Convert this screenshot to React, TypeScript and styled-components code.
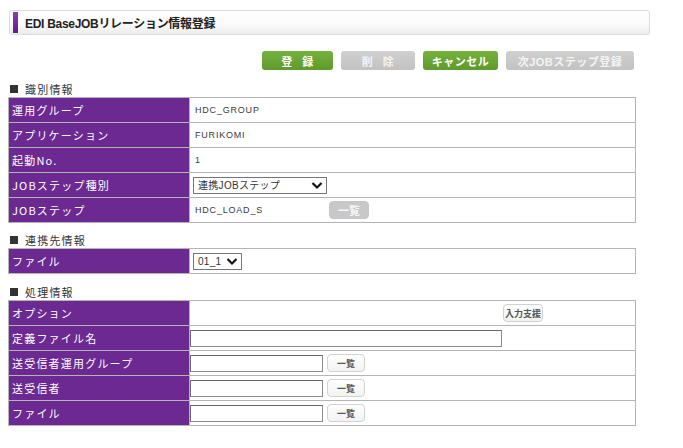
import React from "react";
import styled, { createGlobalStyle } from "styled-components";

const GlobalStyle = createGlobalStyle`
  html, body {
    margin: 0;
    padding: 0;
    background: #ffffff;
  }
  body {
    font-family: "Liberation Sans", "Noto Sans CJK JP", sans-serif;
    color: #333;
  }
`;

const purple = "#6b2991";
const lineGray = "#b4b4b4";

const Page = styled.div`
  width: 683px;
  padding: 10px 0 0 8px;
  box-sizing: border-box;
`;

const TitleBar = styled.div`
  width: 641px;
  height: 25px;
  margin-left: 1px;
  box-sizing: border-box;
  border: 1px solid #dcdcdc;
  border-radius: 3px;
  background: linear-gradient(#ffffff 0%, #fbfbfb 55%, #ececec 100%);
  display: flex;
  align-items: center;
  position: relative;
  padding-left: 15px;
  &::before {
    content: "";
    position: absolute;
    left: 3px;
    top: 1px;
    bottom: 1px;
    width: 5px;
    background: linear-gradient(#8a3db3, #5e1f82);
  }
`;

const TitleText = styled.h1`
  margin: 0;
  font-size: 12px;
  font-weight: bold;
  color: #222;
  letter-spacing: -0.3px;
`;

const ButtonBar = styled.div`
  width: 626px;
  display: flex;
  justify-content: flex-end;
  gap: 8px;
  margin-top: 16px;
`;

const ActionButton = styled.button<{ $tone: "green" | "gray"; $w: number }>`
  width: ${(p) => p.$w}px;
  height: 19px;
  padding: 0;
  border: none;
  border-radius: 3px;
  font-family: "Liberation Sans", "Noto Sans CJK JP", sans-serif;
  font-size: 11px;
  font-weight: bold;
  letter-spacing: 0.5px;
  color: ${(p) => (p.$tone === "green" ? "#ffffff" : "#f4f4f4")};
  background: ${(p) =>
    p.$tone === "green"
      ? "linear-gradient(#74b23c, #5f9a2c)"
      : "linear-gradient(#d0d0d0, #c2c2c2)"};
  word-spacing: 6px;
`;

const SectionTitle = styled.div<{ $gap: number }>`
  margin-top: ${(p) => p.$gap}px;
  height: 16px;
  display: flex;
  align-items: center;
  gap: 7px;
  padding-left: 2px;
  font-family: "Noto Sans CJK JP", sans-serif;
  font-size: 11px;
  color: #333;
  letter-spacing: 1.2px;
  &::before {
    content: "";
    width: 8px;
    height: 8px;
    background: #333;
  }
`;

const FormTable = styled.table`
  width: 628px;
  border-collapse: collapse;
  table-layout: fixed;
`;

const LabelCell = styled.th`
  width: 181px;
  height: 24px;
  padding: 0 0 0 3px;
  box-sizing: border-box;
  background: ${purple};
  border: 1px solid ${lineGray};
  color: #ffffff;
  text-align: left;
  font-family: "Noto Sans CJK JP", sans-serif;
  font-size: 11px;
  font-weight: normal;
  letter-spacing: 1.2px;
`;

const ValueCell = styled.td<{ $pad?: number }>`
  height: 24px;
  padding: 0 0 0 ${(p) => p.$pad ?? 5}px;
  border: 1px solid ${lineGray};
  font-size: 9px;
  color: #3a3a3a;
  letter-spacing: 0.8px;
  vertical-align: middle;
`;

const CellRow = styled.div`
  display: flex;
  align-items: center;
  gap: 4px;
`;

const ValueText = styled.span`
  width: 130px;
`;

const SelectWrap = styled.span<{ $w: number }>`
  position: relative;
  display: inline-block;
  width: ${(p) => p.$w}px;
  height: 17px;
  vertical-align: middle;
`;

const Select = styled.select`
  appearance: none;
  width: 100%;
  height: 100%;
  box-sizing: border-box;
  border: 1px solid #767676;
  border-radius: 0;
  background: #fff;
  padding: 0 0 0 4px;
  font-family: "Liberation Sans", "Noto Sans CJK JP", sans-serif;
  font-size: 10px;
  color: #333;
  letter-spacing: 0.3px;
`;

const Chevron = styled.svg`
  position: absolute;
  right: 4px;
  top: 4px;
  pointer-events: none;
`;

const TextInput = styled.input<{ $w: number }>`
  width: ${(p) => p.$w}px;
  height: 17px;
  margin: 0;
  box-sizing: border-box;
  border: 1px solid #8a8a8a;
  border-top-color: #6a6a6a;
  border-left-color: #6a6a6a;
  padding: 0 3px;
  font-size: 10px;
  vertical-align: middle;
`;

const SmallButton = styled.button<{ $disabled?: boolean; $w: number }>`
  width: ${(p) => p.$w}px;
  height: 18px;
  padding: 0;
  box-sizing: border-box;
  border-radius: 4px;
  border: 1px solid ${(p) => (p.$disabled ? "#c6c6c6" : "#d2d2d2")};
  background: ${(p) =>
    p.$disabled ? "#c8c8c8" : "linear-gradient(#ffffff, #f2f2f2)"};
  color: ${(p) => (p.$disabled ? "#f6f6f6" : "#555")};
  font-family: "Noto Sans CJK JP", sans-serif;
  font-size: ${(p) => (p.$w < 45 && !p.$disabled ? 9 : 11)}px;
  font-weight: bold;
`;

const HelpBox = styled.div`
  width: 353px;
  display: flex;
  justify-content: flex-end;
`;

function ChevronDown() {
  return (
    <Chevron width="12" height="9" viewBox="0 0 12 9">
      <path d="M1.5 2 L6 6.5 L10.5 2" fill="none" stroke="#111" strokeWidth="2.2" />
    </Chevron>
  );
}

function Dropdown({ width, value }: { width: number; value: string }) {
  return (
    <SelectWrap $w={width}>
      <Select defaultValue={value}>
        <option>{value}</option>
      </Select>
      <ChevronDown />
    </SelectWrap>
  );
}

export default function App() {
  return (
    <>
      <GlobalStyle />
      <Page>
        <TitleBar>
          <TitleText>EDI BaseJOBリレーション情報登録</TitleText>
        </TitleBar>

        <ButtonBar>
          <ActionButton $tone="green" $w={71}>登 録</ActionButton>
          <ActionButton $tone="gray" $w={74}>削 除</ActionButton>
          <ActionButton $tone="green" $w={75}>キャンセル</ActionButton>
          <ActionButton $tone="gray" $w={128}>次JOBステップ登録</ActionButton>
        </ButtonBar>

        <SectionTitle $gap={11}>識別情報</SectionTitle>
        <FormTable>
          <tbody>
            <tr>
              <LabelCell>運用グループ</LabelCell>
              <ValueCell>HDC_GROUP</ValueCell>
            </tr>
            <tr>
              <LabelCell>アプリケーション</LabelCell>
              <ValueCell>FURIKOMI</ValueCell>
            </tr>
            <tr>
              <LabelCell>起動No.</LabelCell>
              <ValueCell>1</ValueCell>
            </tr>
            <tr>
              <LabelCell>JOBステップ種別</LabelCell>
              <ValueCell $pad={3}>
                <Dropdown width={134} value="連携JOBステップ" />
              </ValueCell>
            </tr>
            <tr>
              <LabelCell>JOBステップ</LabelCell>
              <ValueCell>
                <CellRow>
                  <ValueText>HDC_LOAD_S</ValueText>
                  <SmallButton $disabled $w={40}>一覧</SmallButton>
                </CellRow>
              </ValueCell>
            </tr>
          </tbody>
        </FormTable>

        <SectionTitle $gap={9}>連携先情報</SectionTitle>
        <FormTable>
          <tbody>
            <tr>
              <LabelCell>ファイル</LabelCell>
              <ValueCell $pad={3}>
                <Dropdown width={49} value="01_1" />
              </ValueCell>
            </tr>
          </tbody>
        </FormTable>

        <SectionTitle $gap={10}>処理情報</SectionTitle>
        <FormTable>
          <tbody>
            <tr>
              <LabelCell>オプション</LabelCell>
              <ValueCell $pad={0}>
                <HelpBox>
                  <SmallButton $w={40}>入力支援</SmallButton>
                </HelpBox>
              </ValueCell>
            </tr>
            <tr>
              <LabelCell>定義ファイル名</LabelCell>
              <ValueCell $pad={0}>
                <TextInput $w={312} />
              </ValueCell>
            </tr>
            <tr>
              <LabelCell>送受信者運用グループ</LabelCell>
              <ValueCell $pad={0}>
                <CellRow>
                  <TextInput $w={133} />
                  <SmallButton $w={38}>一覧</SmallButton>
                </CellRow>
              </ValueCell>
            </tr>
            <tr>
              <LabelCell>送受信者</LabelCell>
              <ValueCell $pad={0}>
                <CellRow>
                  <TextInput $w={133} />
                  <SmallButton $w={38}>一覧</SmallButton>
                </CellRow>
              </ValueCell>
            </tr>
            <tr>
              <LabelCell>ファイル</LabelCell>
              <ValueCell $pad={0}>
                <CellRow>
                  <TextInput $w={133} />
                  <SmallButton $w={38}>一覧</SmallButton>
                </CellRow>
              </ValueCell>
            </tr>
          </tbody>
        </FormTable>
      </Page>
    </>
  );
}
